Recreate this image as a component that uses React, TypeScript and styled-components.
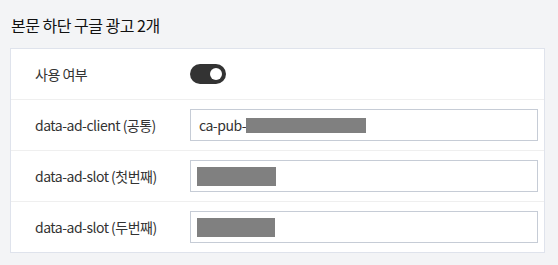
import React from 'react'
import styled, { createGlobalStyle } from 'styled-components'

interface Row {
  label: string,
  kind: 'toggle' | 'field',
  prefix?: string,
  mask?: { width: number, height: number }
}

const rows: Row[] = [
  { label: '사용 여부', kind: 'toggle' },
  { label: 'data-ad-client (공통)', kind: 'field', prefix: 'ca-pub-', mask: { width: 120, height: 15 } },
  { label: 'data-ad-slot (첫번째)', kind: 'field', mask: { width: 79, height: 19 } },
  { label: 'data-ad-slot (두번째)', kind: 'field', mask: { width: 78, height: 19 } }
]

const App = () => {
  return (<S.Page>
    <Global />
    <S.Title>본문 하단 구글 광고 2개</S.Title>
    <S.Panel>
      {
        rows.map(row => (
          <S.Row key={row.label}>
            <S.Label>{row.label}</S.Label>
            {
              row.kind === 'toggle'
                ? <S.Toggle on={true}><S.Knob /></S.Toggle>
                : <S.Field>
                    {row.prefix ? <S.Value>{row.prefix}</S.Value> : null}
                    {
                      row.mask
                        ? <S.Mask style={{ width: row.mask.width, height: row.mask.height }} offset={row.prefix ? 0 : -2} />
                        : null
                    }
                  </S.Field>
            }
          </S.Row>
        ))
      }
    </S.Panel>
  </S.Page>)
}

export default App

const Global = createGlobalStyle`
  html, body {
    margin: 0;
    padding: 0;
    background: #f3f4f6;
  }
  body {
    font-family: "Noto Sans CJK KR", "Noto Sans", sans-serif;
    color: #333;
    letter-spacing: -0.5px;
  }
`

const S = {
  Page: styled.div`
    padding: 13px 13px 0 10px;
    width: 535px;
  `,
  Title: styled.div`
    font-size: 16px;
    line-height: 24px;
    font-weight: 400;
    color: #111;
    padding-left: 1px;
    margin-bottom: 11px;
    letter-spacing: -0.5px;
  `,
  Panel: styled.div`
    background: #fff;
    border: 1px solid #dfe3ec;
  `,
  Row: styled.div`
    display: grid;
    grid-template-columns: 155px 1fr;
    align-items: center;
    height: 50px;
    padding: 0 6px 0 24px;
    border-bottom: 1px solid #efefef;
    &:last-child {
      border-bottom: none;
    }
  `,
  Label: styled.div`
    font-size: 14px;
    color: #333;
  `,
  Toggle: styled.div<{
    on: boolean
  }>`
    width: 36px;
    height: 20px;
    border-radius: 10px;
    background: ${props => props.on ? '#333' : '#ccc'};
    display: flex;
    align-items: center;
    justify-content: ${props => props.on ? 'flex-end' : 'flex-start'};
    padding: 0 4px;
    box-sizing: border-box;
  `,
  Knob: styled.div`
    width: 12px;
    height: 12px;
    border-radius: 50%;
    background: #fff;
  `,
  Field: styled.div`
    height: 32px;
    box-sizing: border-box;
    border: 1px solid #c6ccd6;
    display: flex;
    align-items: center;
    padding: 0 8px;
    font-size: 14px;
    color: #333;
  `,
  Value: styled.span`
    line-height: 1;
  `,
  Mask: styled.span<{
    offset: number
  }>`
    display: block;
    background: #808080;
    margin-left: ${props => `${props.offset}px`};
  `
}
